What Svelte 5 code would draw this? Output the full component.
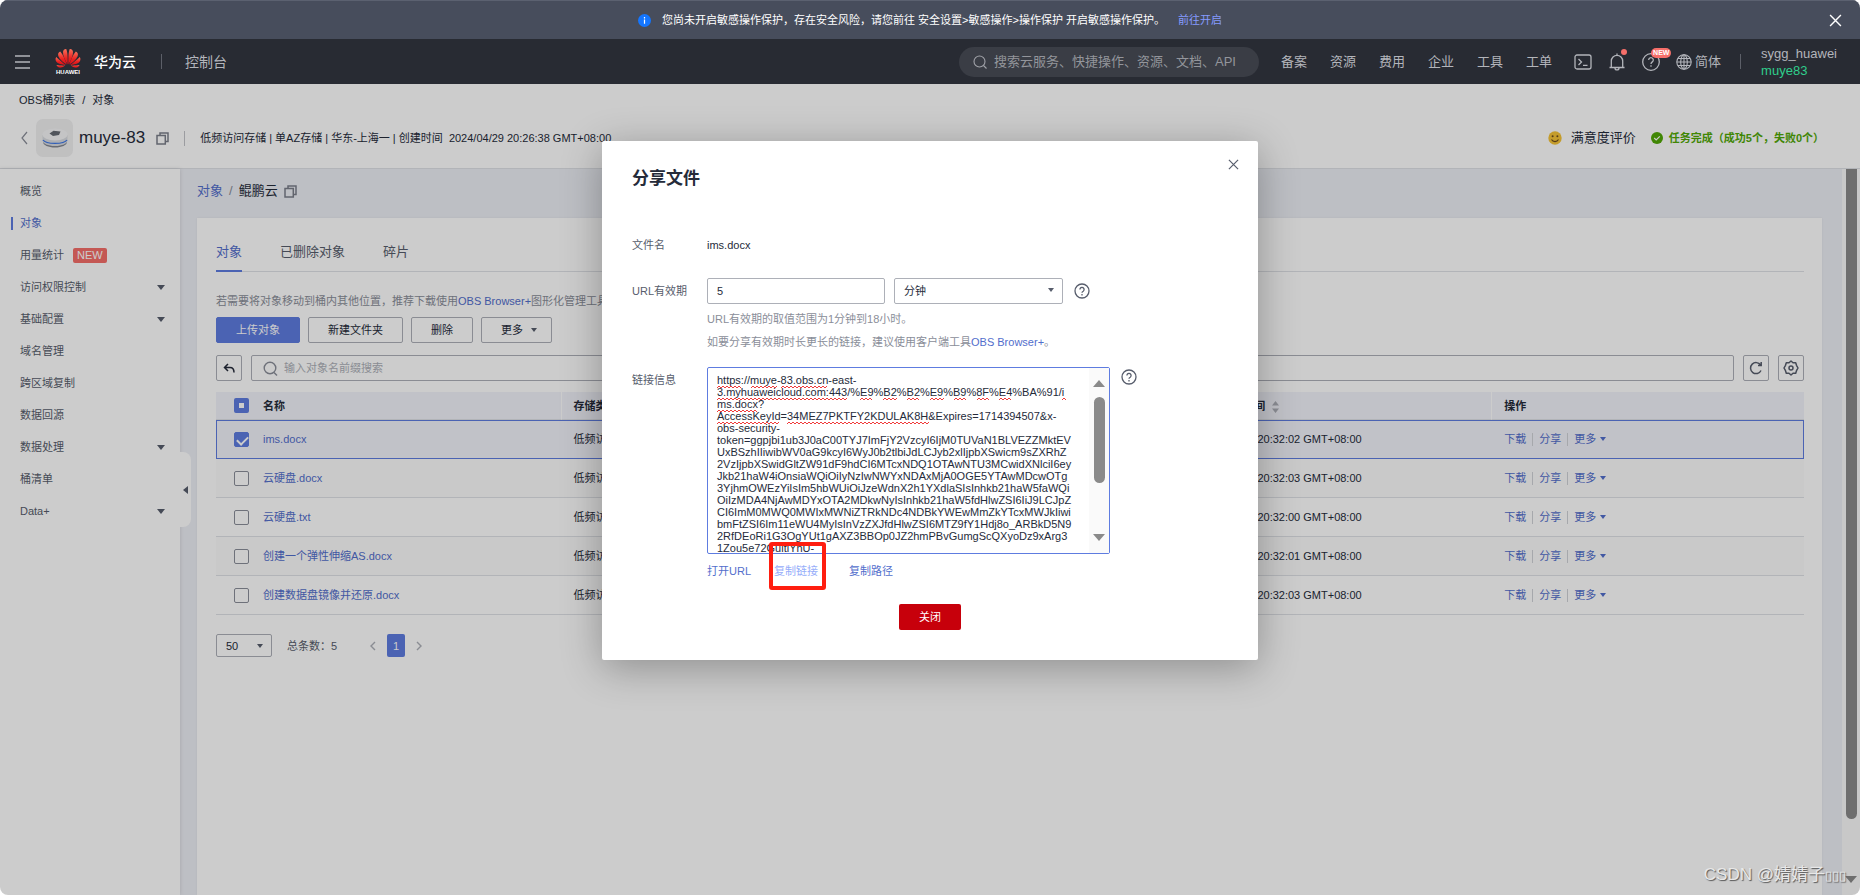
<script>
  const navLinks = ['备案', '资源', '费用', '企业', '工具', '工单'];

  const menu = [
    { name: '概览' },
    { name: '对象', active: true },
    { name: '用量统计', isNew: true },
    { name: '访问权限控制', group: true },
    { name: '基础配置', group: true },
    { name: '域名管理' },
    { name: '跨区域复制' },
    { name: '数据回源' },
    { name: '数据处理', group: true },
    { name: '桶清单' },
    { name: 'Data+', group: true }
  ];

  const files = [
    { name: 'ims.docx', time: '20:32:02', selected: true },
    { name: '云硬盘.docx', time: '20:32:03', selected: false },
    { name: '云硬盘.txt', time: '20:32:00', selected: false },
    { name: '创建一个弹性伸缩AS.docx', time: '20:32:01', selected: false },
    { name: '创建数据盘镜像并还原.docx', time: '20:32:03', selected: false }
  ];

  const shareUrl = [
    'https://muye-83.obs.cn-east-',
    '3.myhuaweicloud.com:443/%E9%B2%B2%E9%B9%8F%E4%BA%91/i',
    'ms.docx?',
    'AccessKeyId=34MEZ7PKTFY2KDULAK8H&Expires=1714394507&x-',
    'obs-security-',
    'token=ggpjbi1ub3J0aC00TYJ7ImFjY2VzcyI6IjM0TUVaN1BLVEZZMktEV',
    'UxBSzhIIiwibWV0aG9kcyI6WyJ0b2tlbiJdLCJyb2xlIjpbXSwicm9sZXRhZ',
    '2VzIjpbXSwidGltZW91dF9hdCI6MTcxNDQ1OTAwNTU3MCwidXNlciI6ey',
    'Jkb21haW4iOnsiaWQiOiIyNzIwNWYxNDAxMjA0OGE5YTAwMDcwOTg',
    '3YjhmOWEzYiIsIm5hbWUiOiJzeWdnX2h1YXdlaSIsInhkb21haW5faWQi',
    'OiIzMDA4NjAwMDYxOTA2MDkwNyIsInhkb21haW5fdHlwZSI6IiJ9LCJpZ',
    'CI6ImM0MWQ0MWIxMWNiZTRkNDc4NDBkYWEwMmZkYTcxMWJkIiwi',
    'bmFtZSI6Im11eWU4MyIsInVzZXJfdHlwZSI6MTZ9fY1Hdj8o_ARBkD5N9',
    '2RfDEoRi1G3OgYUt1gAXZ3BBOp0JZ2hmPBvGumgScQXyoDz9xArg3',
    '1Zou5e72GultlYhU-'
  ].join('\n');

  // Spell-check underlines: line index, start, end
  const marks = [
    [0, 0, 24], [0, 34, 60], [0, 64, 111],
    [1, 0, 131], [1, 143, 156], [1, 166, 180], [1, 190, 203], [1, 213, 227],
    [1, 237, 250], [1, 260, 273], [1, 282, 295], [1, 345, 349],
    [2, 0, 41],
    [3, 0, 63], [3, 70, 212]
  ];

  function wave([line, from, to]) {
    const y = 18 + line * 12;
    let d = `M${from} ${y + 2}`;
    let up = true;
    for (let x = from + 2; x <= to; x += 2) {
      d += `L${x} ${up ? y : y + 2}`;
      up = !up;
    }
    return d;
  }

  // Right half of the flower; the left half is mirrored
  const petals = [
    'M13.4 16.4C13.2 11 13.4 4.500 14.600 1.200 16.200.8 17.800 2 18 4 18.200 7.500 16 12.500 13.400 16.400Z',
    'M14.200 16.600C16 11.500 18.200 6.500 20.800 3.600 22.600 4.400 23.400 6.200 22.600 8.200 21.200 11.500 17.500 14.600 14.200 16.600Z',
    'M15 17C18.500 14.800 22.200 11.500 24.800 9 26 11 25.600 13.400 23.600 14.800 21.400 16.200 18 16.800 15 17Z',
    'M15.600 17.600C18.600 17.700 22 17.600 24.600 17 23.800 18.900 22 19.900 20 19.600 18.400 19.300 16.800 18.400 15.600 17.600Z'
  ];
</script>

{#snippet copyIcon()}
  <svg width="13" height="13" viewBox="0 0 13 13" fill="none" stroke="#7b7f8a" stroke-width="1.5" aria-hidden="true">
    <rect x="1" y="3.5" width="8.3" height="8.5" /><path d="M4 3.5V1h8v8.5H9.3" />
  </svg>
{/snippet}

{#snippet helpIcon()}
  <svg width="16" height="16" viewBox="0 0 16 16" fill="none" stroke="#575d6c" stroke-width="1.3" aria-hidden="true">
    <circle cx="8" cy="8" r="7" /><path d="M5.9 6.4a2.1 2.1 0 1 1 3.3 1.8c-.8.5-1.2.8-1.2 1.6" /><path d="M8 11v1.4" />
  </svg>
{/snippet}

{#snippet cross(size)}
  <svg width={size} height={size} viewBox="0 0 12 12" fill="none" stroke="currentColor" stroke-width="1.3" aria-hidden="true">
    <path d="M1 1l10 10M11 1L1 11" />
  </svg>
{/snippet}

<div class="app">
  <div class="banner">
    <p>
      <svg width="13" height="13" viewBox="0 0 13 13" aria-hidden="true"><circle cx="6.5" cy="6.5" r="6.5" fill="#1476ff" /><path d="M6.5 5.6v4.2M6.5 3v1.4" stroke="#fff" stroke-width="1.2" /></svg>
      <span>您尚未开启敏感操作保护，存在安全风险，请您前往 安全设置&gt;敏感操作&gt;操作保护 开启敏感操作保护。</span>
      <a href="#enable">前往开启</a>
    </p>
    <button class="plain banner-close" aria-label="关闭提示">{@render cross(13)}</button>
  </div>

  <header class="nav">
    <button class="plain burger" aria-label="菜单">
      <svg width="15" height="14" viewBox="0 0 15 14" stroke="#b3b5bb" stroke-width="1.4" aria-hidden="true"><path d="M0 1h15M0 7h15M0 13h15" /></svg>
    </button>
    <a class="logo" href="#home">
      <span class="mark">
        <svg width="26" height="20" viewBox="0 0 26 20" aria-hidden="true">
          <defs><linearGradient id="petal" x1="0" y1="0" x2="0" y2="1"><stop offset="0" stop-color="#f9705a" /><stop offset=".6" stop-color="#e8201f" /><stop offset="1" stop-color="#d80f1a" /></linearGradient></defs>
          {#each petals as d}
            <path {d} fill="url(#petal)" />
            <path {d} fill="url(#petal)" transform="translate(26 0) scale(-1 1)" />
          {/each}
        </svg>
        <small>HUAWEI</small>
      </span>
      <b>华为云</b>
    </a>
    <i class="bar"></i>
    <a class="console" href="#console">控制台</a>
    <label class="search">
      <svg width="14" height="14" viewBox="0 0 14 14" fill="none" stroke="#a0a2a8" stroke-width="1.1" aria-hidden="true"><circle cx="6.500" cy="6.500" r="5.500" /><path d="M10.500 10.500l3 3" /></svg>
      <input type="text" aria-label="搜索" placeholder="搜索云服务、快捷操作、资源、文档、API" />
    </label>
    <nav>
      {#each navLinks as link}<a href="#nav">{link}</a>{/each}
    </nav>
    <div class="tools">
      <button class="plain" aria-label="命令行">
        <svg width="18" height="18" viewBox="0 0 18 18" fill="none" stroke="#b3b5bb" stroke-width="1.3" aria-hidden="true"><rect x="1" y="2" width="16" height="14" rx="2" /><path d="M4.500 6l3 3-3 3M9 12.300h4.500" /></svg>
      </button>
      <button class="plain" aria-label="消息">
        <svg width="18" height="18" viewBox="0 0 18 18" fill="none" stroke="#b3b5bb" stroke-width="1.300" aria-hidden="true"><path d="M1.500 14.500h15M3.300 14.300V8a5.700 5.700 0 0 1 11.400 0v6.300M9 2V.5M7 15c0 2.600 4 2.600 4 0" /></svg>
        <i class="dot"></i>
      </button>
      <button class="plain" aria-label="帮助">
        <svg width="18" height="18" viewBox="0 0 18 18" fill="none" stroke="#b3b5bb" stroke-width="1.300" aria-hidden="true"><circle cx="9" cy="9" r="8.300" /><path d="M6.700 7a2.300 2.300 0 1 1 3.600 1.900C9.400 9.500 9 10 9 10.900M9 12.300v1.500" /></svg>
        <em class="new-pill">NEW</em>
      </button>
      <button class="plain lang">
        <svg width="16" height="16" viewBox="0 0 16 16" fill="none" stroke="#b3b5bb" stroke-width="1.100" aria-hidden="true"><circle cx="8" cy="8" r="7.200" /><ellipse cx="8" cy="8" rx="3.300" ry="7.200" /><path d="M.8 8h14.400M8 .8v14.400M2 4.500h12M2 11.500h12" /></svg>
        简体
      </button>
    </div>
    <i class="bar"></i>
    <div class="user"><span>sygg_huawei</span><span class="sub">muye83</span></div>
  </header>

  <div class="workspace">
    <section class="bucket">
      <div class="crumbs"><a href="#buckets">OBS桶列表</a><span>/</span><a href="#objects">对象</a></div>
      <div class="bucket-row">
        <button class="plain back" aria-label="返回">
          <svg width="7" height="14" viewBox="0 0 7 14" fill="none" stroke="#8a8e99" stroke-width="1.200" aria-hidden="true"><path d="M6 1L1 7l5 6" /></svg>
        </button>
        <div class="bucket-icon">
          <svg width="26" height="24" viewBox="0 0 26 24" aria-hidden="true">
            <path d="M1 13v3c0 3 5.400 5.500 12 5.500S25 19 25 16v-3z" fill="#82868f" />
            <path d="M.5 9v5.500C.5 17.500 6 20 13 20s12.500-2.500 12.500-5.500V9z" fill="#d9dbe0" />
            <path d="M1 14c3 4.500 21 4.500 24 0" fill="none" stroke="#3f78e6" stroke-width="1.300" />
            <ellipse cx="13" cy="8.500" rx="12.500" ry="6" fill="#f6f6f7" />
            <path d="M7.500 7.500l4-2.800 7 .8-1.500 3.600-6 .9z" fill="#666b73" />
          </svg>
        </div>
        <h1>muye-83</h1>
        {@render copyIcon()}
        <i class="bar light"></i>
        <p>低频访问存储 | 单AZ存储 | 华东-上海一 | 创建时间 &nbsp;2024/04/29 20:26:38 GMT+08:00</p>
        <div class="status">
          <svg width="14" height="14" viewBox="0 0 14 14" aria-hidden="true"><circle cx="7" cy="7" r="6.700" fill="#f5c436" /><circle cx="4.600" cy="5.300" r="1" fill="#6b4a1c" /><circle cx="9.400" cy="5.300" r="1" fill="#6b4a1c" /><path d="M3.500 8.500c1.500 2.800 5.500 2.800 7 0" fill="none" stroke="#6b4a1c" stroke-width="1.100" /></svg>
          <span class="rate">满意度评价</span>
          <svg width="12" height="12" viewBox="0 0 12 12" aria-hidden="true"><circle cx="6" cy="6" r="6" fill="#50a805" /><path d="M3.200 6l2 2 3.600-3.700" fill="none" stroke="#fff" stroke-width="1.200" /></svg>
          <span class="done">任务完成（成功5个，失败0个）</span>
        </div>
      </div>
    </section>

    <div class="body">
      <aside>
        <ul>
          {#each menu as item}
            <li class:active={item.active}>
              <a href="#menu">{item.name}</a>
              {#if item.isNew}<em>NEW</em>{/if}
              {#if item.group}<i class="caret"></i>{/if}
            </li>
          {/each}
        </ul>
        <button class="plain collapse" aria-label="收起菜单"><i></i></button>
      </aside>

      <main>
        <div class="path"><a href="#objects">对象</a><span class="slash">/</span><span>鲲鹏云</span>{@render copyIcon()}</div>
        <div class="card">
          <div class="tabs">
            <button class="plain on">对象</button><button class="plain">已删除对象</button><button class="plain">碎片</button>
          </div>
          <p class="tip">若需要将对象移动到桶内其他位置，推荐下载使用<a href="#browser">OBS Browser+</a>图形化管理工具。如果您需要通过域名访问桶内的对象，需先绑定自定义域名，具体操作请参考使用自定义域名在线预览桶内对<a href="#preview">对象</a>。</p>
          <div class="actions">
            <button class="btn primary">上传对象</button>
            <button class="btn">新建文件夹</button>
            <button class="btn">删除</button>
            <button class="btn menu">更多<i class="caret small"></i></button>
          </div>
          <div class="filter">
            <button class="btn square" aria-label="返回上级">
              <svg width="12" height="11" viewBox="0 0 12 11" fill="none" stroke="#252b3a" stroke-width="1.500" aria-hidden="true"><path d="M5 1L1.500 4.500 5 8M1.500 4.500H7c2.600 0 4 1.600 4 5" /></svg>
            </button>
            <label class="find">
              <svg width="15" height="15" viewBox="0 0 15 15" fill="none" stroke="#8a8e99" stroke-width="1.400" aria-hidden="true"><circle cx="7" cy="7" r="5.800" /><path d="M11 11.500l3 3" /></svg>
              <input type="text" aria-label="搜索对象" placeholder="输入对象名前缀搜索" />
            </label>
            <button class="btn square" aria-label="刷新">
              <svg width="14" height="14" viewBox="0 0 14 14" fill="none" stroke="#575d6c" stroke-width="1.500" aria-hidden="true"><path d="M12 9.500a5.500 5.500 0 1 1-.4-5.500M12.200 1v3.500H9" /></svg>
            </button>
            <button class="btn square" aria-label="设置">
              <svg width="16" height="16" viewBox="0 0 16 16" fill="none" stroke="#575d6c" stroke-width="1.500" stroke-linejoin="round" aria-hidden="true"><path d="M6 2.700L8 1l2 1.700 2.700 0 .8 2.600L15 8l-1.500 2.700-.8 2.600-2.700 0L8 15l-2-1.700-2.700 0-.8-2.600L1 8l1.500-2.700.8-2.600z" /><circle cx="8" cy="8" r="2" /></svg>
            </button>
          </div>
          <table>
            <colgroup><col class="c-check" /><col class="c-name" /><col /><col /><col /><col /><col class="c-time" /><col class="c-ops" /></colgroup>
            <thead>
              <tr>
                <th><input type="checkbox" class="partial" aria-label="全选" /></th>
                <th class="name">名称</th><th>存储类别</th><th>大小</th><th>加密状态</th><th>恢复状态</th>
                <th>最后修改时间<svg class="sort" width="7" height="12" viewBox="0 0 7 12" fill="#adb0b8" aria-hidden="true"><path d="M3.500 0L7 4.500H0zM3.500 12L7 7.500H0z" /></svg></th>
                <th>操作</th>
              </tr>
            </thead>
            <tbody>
              {#each files as file}
                <tr class:selected={file.selected}>
                  <td><input type="checkbox" checked={file.selected} aria-label={file.name} /></td>
                  <td class="name"><a href="#file">{file.name}</a></td>
                  <td>低频访问存储</td><td>--</td><td>未加密</td><td>--</td>
                  <td>2024/04/29 {file.time} GMT+08:00</td>
                  <td><span class="ops"><a href="#download">下载</a><a href="#share">分享</a><a href="#more">更多<i class="caret small"></i></a></span></td>
                </tr>
              {/each}
            </tbody>
          </table>
          <div class="pager">
            <span class="pick"><select aria-label="每页条数"><option>50</option></select><i class="caret small"></i></span>
            <span class="total">总条数：5</span>
            <button class="plain" aria-label="上一页"><svg width="6" height="10" viewBox="0 0 6 10" fill="none" stroke="#adb0b8" stroke-width="1.400"><path d="M5 1L1 5l4 4" /></svg></button>
            <button class="plain page">1</button>
            <button class="plain" aria-label="下一页"><svg width="6" height="10" viewBox="0 0 6 10" fill="none" stroke="#adb0b8" stroke-width="1.400"><path d="M1 1l4 4-4 4" /></svg></button>
          </div>
        </div>
      </main>

      <div class="page-scroll" aria-hidden="true"><i class="thumb"></i><i class="down"></i></div>
    </div>

    <div class="mask">
      <div class="dialog" role="dialog" aria-labelledby="share-title">
        <button class="plain dialog-close" aria-label="关闭对话框">{@render cross(11)}</button>
        <h2 id="share-title">分享文件</h2>
        <div class="field file"><span class="label">文件名</span><span>ims.docx</span></div>
        <div class="field">
          <label class="label" for="expire">URL有效期</label>
          <input id="expire" type="text" value="5" />
          <span class="pick unit"><select aria-label="时间单位"><option>分钟</option></select><i class="caret small"></i></span>
          {@render helpIcon()}
        </div>
        <div class="hints">
          <p>URL有效期的取值范围为1分钟到18小时。</p>
          <p>如要分享有效期时长更长的链接，建议使用客户端工具<a href="#browser">OBS Browser+</a>。</p>
        </div>
        <div class="field link">
          <label class="label" for="share-link">链接信息</label>
          <div class="area">
            <textarea id="share-link" spellcheck="false" readonly value={shareUrl}></textarea>
            <div class="area-scroll" aria-hidden="true"><i class="up"></i><i class="thumb"></i><i class="down"></i></div>
            <svg class="spelling" width="360" height="60" viewBox="0 0 360 60" fill="none" stroke="#f03a3a" aria-hidden="true">
              {#each marks as mark}<path d={wave(mark)} />{/each}
            </svg>
          </div>
          {@render helpIcon()}
        </div>
        <div class="links">
          <a href="#open">打开URL</a>
          <a class="copied" href="#copy">复制链接<i class="callout"></i></a>
          <a href="#path">复制路径</a>
        </div>
        <button class="plain confirm">关闭</button>
      </div>
    </div>
  </div>
  <div class="watermark">CSDN @婧婧子<span>▯▯▯</span></div>
</div>

<style>
  :global(body) { margin: 0; background: #fff; }
  .app {
    position: relative; display: flex; flex-direction: column; min-height: 100vh;
    border-radius: 8px; overflow: hidden; background: #fff;
    font: 11px/16px "Liberation Sans", "Noto Sans CJK SC", sans-serif; color: #252b3a;
  }
  .app * { box-sizing: border-box; }
  p, h1, h2, ul { margin: 0; padding: 0; list-style: none; }
  a { color: #526ecc; text-decoration: none; }
  em { font-style: normal; }
  svg { display: block; flex: none; }
  button, input, select, textarea { font: inherit; color: inherit; }
  .plain { padding: 0; border: 0; background: none; display: flex; align-items: center; justify-content: center; }
  .caret { width: 0; height: 0; border: 4px solid transparent; border-top: 5px solid #575d6c; border-bottom: 0; }
  .caret.small { border-width: 4px 3px 0; }

  .banner { display: flex; align-items: center; justify-content: center; height: 39px; background: #474d5c; border-top: 1px solid #5b6170; color: #fff; position: relative; }
  .banner p { display: flex; align-items: center; }
  .banner span { margin: 0 13px 0 11px; }
  .banner a { color: #859bff; }
  .banner-close { position: absolute; right: 18px; color: #fff; }

  .nav { display: flex; align-items: center; height: 45px; padding: 0 23px 0 15px; background: #282b33; color: #b3b5bb; font-size: 13px; flex: none; }
  .nav a { color: #b3b5bb; }
  .logo { display: flex; align-items: center; gap: 13px; margin-left: 25px; }
  .nav .logo b { color: #fff; font-size: 14px; font-weight: 500; }
  .mark { display: flex; flex-direction: column; align-items: center; }
  .mark small { font: bold 6px/7px "Liberation Sans", sans-serif; color: #fff; margin-top: 1px; }
  .bar { width: 1px; height: 15px; background: #5c5f68; flex: none; margin-left: 25px; }
  .nav .console { font-size: 14px; margin-left: 23px; }
  .search { display: flex; align-items: center; gap: 7px; width: 300px; height: 30px; margin-left: auto; padding: 0 14px; border-radius: 15px; background: #3a3d45; }
  .search input { flex: 1; min-width: 0; border: 0; padding: 0; background: none; }
  .search input::placeholder { color: #93959b; opacity: 1; }
  nav { display: flex; gap: 23px; margin: 0 22px 0 22px; }
  .tools { display: flex; align-items: center; gap: 16px; }
  .tools button { position: relative; gap: 3px; }
  .dot { position: absolute; right: -1px; top: -4px; width: 6px; height: 6px; border-radius: 3px; background: #f66f6a; }
  .new-pill { position: absolute; left: 9px; top: -5px; padding: 0 2px; border-radius: 5px; background: #f66f6a; color: #fff; font: bold 7px/10px "Liberation Sans", sans-serif; }
  .nav > .bar:last-of-type { margin-left: 19px; }
  .user { display: flex; flex-direction: column; margin-left: 20px; line-height: 17px; }
  .user .sub { color: #2fce8c; }

  .workspace { position: relative; flex: 1; display: flex; flex-direction: column; }
  .bucket { height: 85px; border-bottom: 1px solid #dfe1e6; flex: none; }
  .crumbs { display: flex; gap: 7px; padding: 8px 0 0 19px; }
  .crumbs a { color: #252b3a; }
  .bucket-row { display: flex; align-items: center; height: 38px; margin-top: 11px; padding: 0 36px 0 21px; }
  .back { margin-right: 8px; }
  .bucket-icon { display: grid; place-items: center; width: 37px; height: 38px; border-radius: 7px; background: #f0f0f1; }
  h1 { margin: 0 11px 0 6px; font-size: 17px; font-weight: 400; line-height: 20px; }
  .bar.light { margin: 0 15px; background: #c2c4c9; }
  .status { display: flex; align-items: center; margin-left: auto; }
  .rate { margin: 0 15px 0 9px; font-size: 13px; }
  .done { margin-left: 6px; color: #50a805; font-weight: 600; }

  .body { flex: 1; display: flex; }
  aside { position: relative; width: 180px; flex: none; box-shadow: 0 0 4px #0002; }
  aside ul { padding-top: 6px; }
  aside li { display: flex; align-items: center; height: 32px; padding: 0 15px 0 20px; }
  aside li a { color: #575d6c; }
  aside .caret { margin-left: auto; }
  aside li.active { padding-left: 11px; }
  aside li.active::before { content: ""; width: 2px; height: 13px; margin-right: 7px; background: #5e7ce0; }
  aside li.active a { color: #526ecc; }
  aside em { margin-left: 9px; padding: 0 4px; border-radius: 2px; background: #f66f6a; color: #fff; line-height: 15px; }
  .collapse { position: absolute; left: 180px; top: 283px; width: 11px; height: 75px; border-radius: 0 8px 8px 0; background: #fff; }
  .collapse i { border: 4px solid transparent; border-right: 5px solid #575d6c; border-left: 0; }

  main { flex: 1; min-width: 0; display: flex; flex-direction: column; padding: 0 20px 0 17px; background: #edeff5; }
  .path { display: flex; align-items: center; height: 49px; padding-bottom: 5px; font-size: 13px; }
  .slash { margin: 0 6px; color: #8a8e99; }
  .path :global(svg) { margin-left: 6px; }
  .card { flex: 1; padding: 15px 18px 0 19px; background: #fff; box-shadow: 0 0 2px #0001; }
  .tabs { display: flex; gap: 38px; border-bottom: 1px solid #dfe1e6; }
  .tabs button { height: 39px; font-size: 13px; color: #575d6c; border-bottom: 2px solid transparent; margin-bottom: -1px; }
  .tabs .on { color: #526ecc; border-color: #5e7ce0; }
  .tip { margin-top: 21px; color: #8a8e99; white-space: nowrap; overflow: hidden; }
  .actions { display: flex; gap: 8px; margin-top: 8px; }
  .btn { display: flex; align-items: center; justify-content: center; gap: 8px; height: 26px; padding: 0 19px; border: 1px solid #adb0b8; border-radius: 2px; background: none; }
  .btn.menu { padding-right: 14px; }
  .btn.primary { background: #5e7ce0; border-color: #5e7ce0; color: #fff; }
  .filter { display: flex; gap: 9px; margin-top: 12px; }
  .btn.square { width: 26px; padding: 0; flex: none; }
  .find { flex: 1; display: flex; align-items: center; gap: 6px; padding: 0 11px; border: 1px solid #adb0b8; border-radius: 2px; }
  .find input { flex: 1; border: 0; padding: 0; background: none; }
  .find input::placeholder { color: #adb0b8; opacity: 1; }

  table { width: 100%; margin-top: 11px; table-layout: fixed; border-collapse: separate; border-spacing: 0; }
  .c-check { width: 46px; }
  .c-name { width: 18.8%; }
  .c-time { width: 19.2%; }
  .c-ops { width: 19.7%; }
  th, td { padding: 0 0 0 12px; text-align: left; white-space: nowrap; overflow: hidden; border-bottom: 1px solid #dfe1e6; }
  th { height: 28px; background: #f2f3fb; border-left: 1px solid #fff; font-weight: 700; }
  th:first-child, th.name { border-left: 0; }
  td { height: 39px; padding-left: 13px; }
  th:first-child, td:first-child { padding-left: 18px; }
  th.name, td.name { padding-left: 1px; }
  tbody tr:nth-child(even) { background: #fcfcfc; }
  tr.selected { background: #f2f3fb; outline: 1px solid #5e7ce0; outline-offset: -1px; }
  .sort { display: inline-block; margin-left: 7px; vertical-align: middle; }
  input[type="checkbox"] { appearance: none; display: block; width: 15px; height: 15px; margin: 0; border: 1px solid #8a8e99; border-radius: 2px; background: #fff; }
  input[type="checkbox"]:checked { border-color: #5e7ce0; background: #5e7ce0; }
  input[type="checkbox"]:checked::after { content: ""; display: block; width: 9px; height: 5px; margin: 3px 2px; border: solid #fff; border-width: 0 0 2px 2px; transform: rotate(-45deg); }
  input[type="checkbox"].partial { border: 5px solid #5e7ce0; }
  .ops { display: flex; align-items: center; }
  .ops a { display: flex; align-items: center; gap: 4px; padding: 0 6px; border-left: 1px solid #d0d2d8; line-height: 13px; }
  .ops a:first-child { padding-left: 0; border: 0; }
  .ops .caret { border-top-color: #526ecc; }
  .pager { display: flex; align-items: center; margin-top: 19px; color: #575d6c; }
  .pick { position: relative; display: flex; width: 56px; height: 23px; color: #252b3a; }
  .pick select { appearance: none; width: 100%; padding: 0 9px; border: 1px solid #adb0b8; border-radius: 2px; background: #fff; }
  .pick .caret { position: absolute; right: 9px; top: 10px; }
  .total { margin: 0 33px 0 15px; }
  .page { width: 18px; height: 23px; margin: 0 11px; border-radius: 2px; background: #5e7ce0; color: #fff; }

  .page-scroll { display: flex; flex-direction: column; align-items: center; justify-content: space-between; width: 18px; padding-bottom: 12px; background: #fbfbfb; }
  .page-scroll .thumb { width: 11px; height: 91%; border-radius: 0 0 6px 6px; background: #8a8a8a; }
  .down { border: 6px solid transparent; border-top: 7px solid #8a8a8a; border-bottom: 0; }
  .up { border: 6px solid transparent; border-bottom: 7px solid #8a8a8a; border-top: 0; }

  .mask { position: absolute; inset: 0; display: flex; align-items: flex-start; justify-content: center; padding-top: 57px; background: rgba(0, 0, 0, .2); }
  .dialog { position: relative; width: 656px; padding: 26px 30px 30px; background: #fff; border-radius: 2px; box-shadow: 0 8px 40px rgba(0, 0, 0, .3); }
  .dialog-close { position: absolute; right: 19px; top: 18px; color: #575d6c; }
  h2 { font-size: 17px; line-height: 24px; font-weight: 700; }
  .field { display: flex; align-items: center; }
  .field :global(> svg) { margin-left: 11px; }
  .label { width: 75px; flex: none; color: #575d6c; }
  .file { margin: 46px 0 25px; }
  .field > input { width: 178px; height: 26px; padding: 0 9px; border: 1px solid #adb0b8; border-radius: 2px; }
  .unit { width: 169px; height: 26px; margin-left: 9px; }
  .hints { margin: 4px 0 13px 75px; color: #8a8e99; line-height: 23px; }
  .link { align-items: flex-start; }
  .link .label { padding-top: 5px; }
  .link :global(> svg) { margin-top: 2px; }
  .area { position: relative; display: flex; width: 403px; height: 187px; border: 1px solid #5e7ce0; border-radius: 2px; }
  textarea { flex: 1; min-width: 0; padding: 6px 0 0 9px; border: 0; outline: 0; resize: none; overflow: hidden; background: none; white-space: pre; line-height: 12px; }
  .area-scroll { display: flex; flex-direction: column; align-items: center; width: 20px; padding: 12px 0; background: #fafafa; }
  .area-scroll .thumb { width: 11px; height: 86px; margin-top: 10px; border-radius: 6px; background: #8a8a8a; }
  .area-scroll .down { margin-top: auto; }
  .spelling { position: absolute; left: 9px; top: 0; }
  .links { display: flex; gap: 23px; margin: 9px 0 25px 75px; }
  .copied { position: relative; margin-right: 8px; color: #96adfa; }
  .callout { position: absolute; left: -5px; right: -8px; top: -21px; height: 48px; border: 4px solid #ff1e10; border-radius: 3px; }
  .confirm { width: 62px; height: 26px; margin: 0 auto; border-radius: 2px; background: #c7000b; color: #fff; }

  .watermark { position: absolute; right: 14px; bottom: 8px; color: #e8e8e8; font-size: 17px; line-height: 22px; text-shadow: 1px 1px 1px #555; }
  .watermark span { font-size: 13px; }
</style>
